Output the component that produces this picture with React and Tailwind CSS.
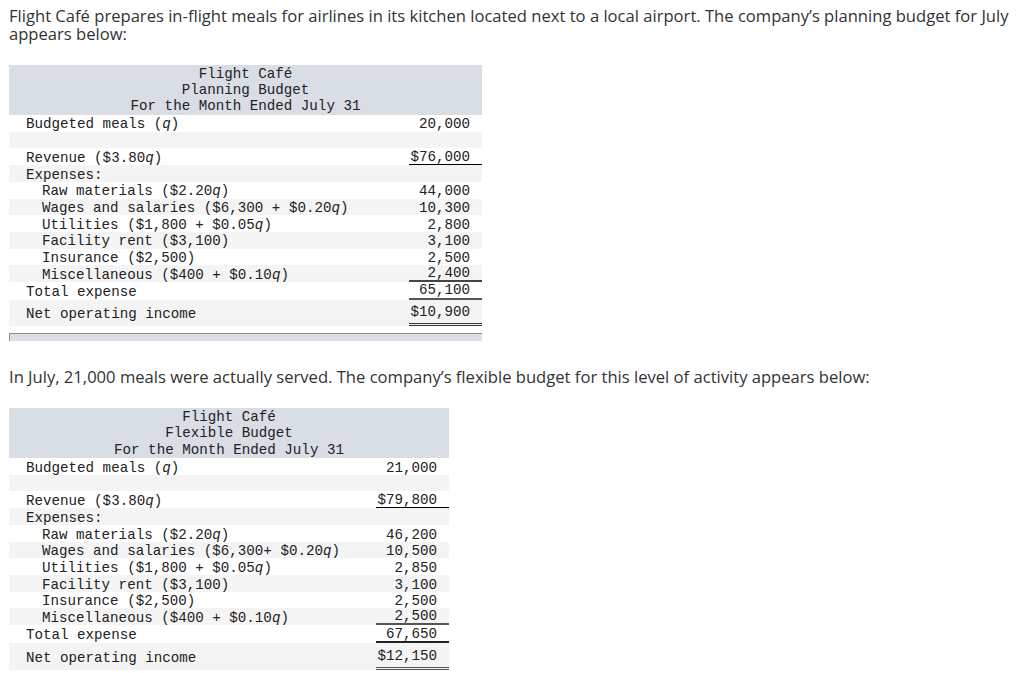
import React from 'react';

const planning = [
  { label: 'Budgeted meals', q: true, value: '20,000', h: 'h-[17px]' },
  { label: '', value: '', h: 'h-[16.5px]' },
  { label: 'Revenue ($3.80', q: true, close: ')', value: '$76,000', line: 'border-b border-black', h: 'h-[17px]' },
  { label: 'Expenses:', value: '', h: 'h-[16.5px]' },
  { label: 'Raw materials ($2.20', q: true, close: ')', value: '44,000', indent: true, h: 'h-[17px]' },
  { label: 'Wages and salaries ($6,300 + $0.20', q: true, close: ')', value: '10,300', indent: true, h: 'h-[16.5px]' },
  { label: 'Utilities ($1,800 + $0.05', q: true, close: ')', value: '2,800', indent: true, h: 'h-[16.5px]' },
  { label: 'Facility rent ($3,100)', value: '3,100', indent: true, h: 'h-[17px]' },
  { label: 'Insurance ($2,500)', value: '2,500', indent: true, h: 'h-[16.5px]' },
  { label: 'Miscellaneous ($400 + $0.10', q: true, close: ')', value: '2,400', indent: true, line: 'border-b-2 border-[#444]', h: 'h-[16.5px]' },
  { label: 'Total expense', value: '65,100', line: 'border-b-2 border-[#555]', h: 'h-[18px]' },
  { label: 'Net operating income', value: '$10,900', line: 'border-b-[3px] border-double border-[#333]', h: 'h-[26px]' },
];

const flexible = [
  { label: 'Budgeted meals', q: true, value: '21,000', h: 'h-[17px]' },
  { label: '', value: '', h: 'h-[16.5px]' },
  { label: 'Revenue ($3.80', q: true, close: ')', value: '$79,800', line: 'border-b border-black', h: 'h-[17px]' },
  { label: 'Expenses:', value: '', h: 'h-[16.5px]' },
  { label: 'Raw materials ($2.20', q: true, close: ')', value: '46,200', indent: true, h: 'h-[17px]' },
  { label: 'Wages and salaries ($6,300+ $0.20', q: true, close: ')', value: '10,500', indent: true, h: 'h-[16.5px]' },
  { label: 'Utilities ($1,800 + $0.05', q: true, close: ')', value: '2,850', indent: true, h: 'h-[16.5px]' },
  { label: 'Facility rent ($3,100)', value: '3,100', indent: true, h: 'h-[17px]' },
  { label: 'Insurance ($2,500)', value: '2,500', indent: true, h: 'h-[16.5px]' },
  { label: 'Miscellaneous ($400 + $0.10', q: true, close: ')', value: '2,500', indent: true, line: 'border-b-2 border-[#555]', h: 'h-[16.5px]' },
  { label: 'Total expense', value: '67,650', line: 'border-b-2 border-[#222]', h: 'h-[18px]' },
  { label: 'Net operating income', value: '$12,150', line: 'border-b-[3px] border-double border-[#555]', h: 'h-[27px]' },
];

function Label({ row }) {
  if (!row.q) return <>{row.label}</>;
  if (row.close) {
    return (
      <>
        {row.label}
        <i>q</i>
        {row.close}
      </>
    );
  }
  return (
    <>
      {row.label} (<i>q</i>)
    </>
  );
}

function BudgetTable({ title, rows, width }) {
  return (
    <div className={`${width} font-['Liberation_Mono',monospace] text-[14.2px] text-[#222]`}>
      <div className="bg-[#d9dde4] text-center leading-[16.2px] pt-[1px]">
        <div>Flight Café</div>
        <div>{title}</div>
        <div>For the Month Ended July 31</div>
      </div>
      {rows.map((row, i) => (
        <div
          key={i}
          className={`flex items-stretch ${row.h} ${i % 2 === 1 ? 'bg-[#f4f4f4]' : 'bg-white'}`}
        >
          <div className={`flex-1 flex items-center pt-[4px] whitespace-pre ${row.indent ? 'pl-[33px]' : 'pl-[17px]'}`}>
            <span>
              <Label row={row} />
            </span>
          </div>
          <div
            className={`w-[73px] flex items-center justify-end pr-[12px] ${
              row.line ? `pt-[3px] ${row.line}` : 'pt-[4px]'
            }`}
          >
            {row.value}
          </div>
        </div>
      ))}
    </div>
  );
}

export default function App() {
  return (
    <div className="bg-white min-h-[673px] px-[9px] pt-[7px] font-['Open_Sans',sans-serif] text-[#333]">
      <p className="text-[16.6px] leading-[18px]">
        Flight Café prepares in-flight meals for airlines in its kitchen located next to a local airport. The
        company’s planning budget for July appears below:
      </p>

      <div className="mt-[22px]">
        <BudgetTable title="Planning Budget" rows={planning} width="w-[473px]" />
        <div className="mt-[7px] w-[473px] h-[8px] bg-[#dcdfe5] border-t border-l border-[#8a8a8a]" />
      </div>

      <p className="mt-[27.5px] text-[16.6px] leading-[18px]">
        In July, 21,000 meals were actually served. The company’s flexible budget for this level of activity
        appears below:
      </p>

      <div className="mt-[22px]">
        <BudgetTable title="Flexible Budget" rows={flexible} width="w-[440px]" />
      </div>
    </div>
  );
}
